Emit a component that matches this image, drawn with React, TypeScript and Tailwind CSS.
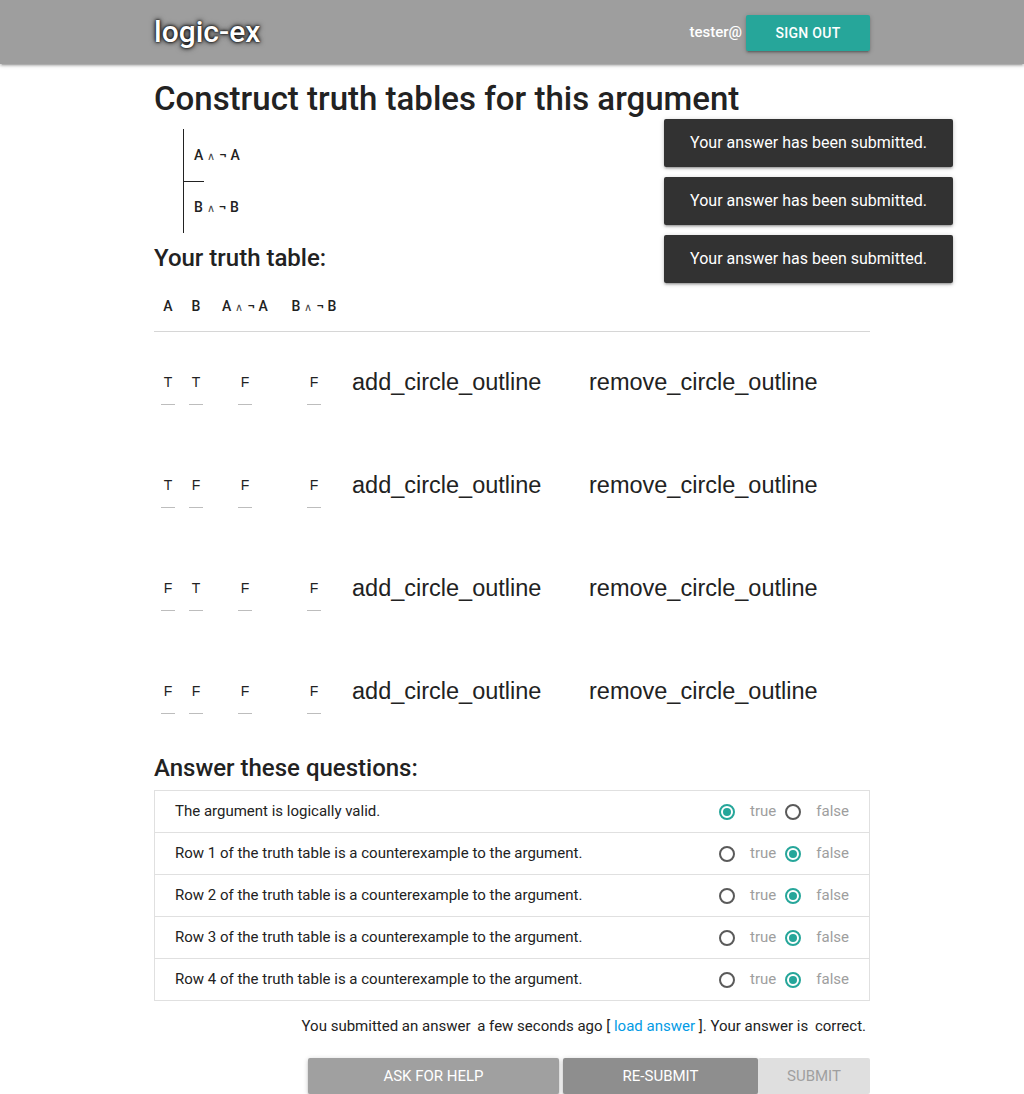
import React from "react";

const rows = [
  ["T", "T", "F", "F"],
  ["T", "F", "F", "F"],
  ["F", "T", "F", "F"],
  ["F", "F", "F", "F"],
];

const questions: [string, boolean][] = [
  ["The argument is logically valid.", true],
  ["Row 1 of the truth table is a counterexample to the argument.", false],
  ["Row 2 of the truth table is a counterexample to the argument.", false],
  ["Row 3 of the truth table is a counterexample to the argument.", false],
  ["Row 4 of the truth table is a counterexample to the argument.", false],
];

function Radio({ checked }: { checked: boolean }) {
  return checked ? (
    <span className="flex h-[16px] w-[16px] shrink-0 items-center justify-center rounded-full border-2 border-[#26a69a]">
      <span className="h-[8px] w-[8px] rounded-full bg-[#26a69a]" />
    </span>
  ) : (
    <span className="h-[16px] w-[16px] shrink-0 rounded-full border-2 border-[#5a5a5a]" />
  );
}

function Formula({ v }: { v: string }) {
  return (
    <span className="whitespace-nowrap">
      {v}
      <span className="mx-[4px] text-[11px] font-normal text-[#444]">∧</span>¬ {v}
    </span>
  );
}

function Cell({ v }: { v: string }) {
  return (
    <div className="flex flex-col items-center">
      <span
        className="h-[20px] text-[14px] leading-[20px] text-[#222]"
        style={{ fontFamily: '"Liberation Sans", Arial, sans-serif' }}
      >
        {v}
      </span>
      <span className="mt-[12px] h-px w-[14px] bg-[#bdbdbd]" />
    </div>
  );
}

const shadow =
  "shadow-[0_2px_2px_0_rgba(0,0,0,0.14),0_3px_1px_-2px_rgba(0,0,0,0.12),0_1px_5px_0_rgba(0,0,0,0.2)]";

export default function App() {
  const colW = ["w-[28px]", "w-[28px]", "w-[70px]", "w-[68px]"];
  return (
    <div
      className="relative min-h-[1094px] bg-white text-[#222]"
      style={{ fontFamily: 'Roboto, "Noto Sans", sans-serif' }}
    >
      <header className="h-16 bg-[#9e9e9e] shadow-[0_2px_2px_0_rgba(0,0,0,0.14),0_3px_1px_-2px_rgba(0,0,0,0.12),0_1px_5px_0_rgba(0,0,0,0.2)]">
        <div className="mx-auto flex h-16 w-[716px] items-center">
          <span
            className="text-[30px] font-medium leading-[64px] text-white"
            style={{ textShadow: "0 0 2px #000, 0 0 4px #000, 0 0 6px rgba(0,0,0,0.5)" }}
          >
            logic-ex
          </span>
          <div className="ml-auto flex items-center">
            <span className="text-[15px] font-medium text-white">tester@</span>
            <button
              className={`ml-[4px] mt-[2px] h-[36px] w-[124px] rounded-[2px] bg-[#26a69a] text-[14px] font-medium uppercase tracking-[0.3px] text-white ${shadow}`}
            >
              Sign out
            </button>
          </div>
        </div>
      </header>

      <main className="mx-auto w-[716px]">
        <h1 className="mt-[15px] h-[40px] whitespace-nowrap text-[33px] font-medium leading-[40px] text-[#222]">
          Construct truth tables for this argument
        </h1>

        <div className="ml-[29px] mt-[10px] w-[120px] border-l border-[#222]">
          <div className="flex h-[52px] items-center pl-[10px] text-[14px] font-medium">
            <Formula v="A" />
          </div>
          <div className="h-px w-[20px] bg-[#222]" />
          <div className="flex h-[51px] items-center pl-[10px] text-[14px] font-medium">
            <Formula v="B" />
          </div>
        </div>

        <h2 className="mt-[10px] h-[30px] text-[24px] font-medium leading-[30px]">Your truth table:</h2>

        <div className="mt-[21px] flex h-[24px] items-center text-[14px] font-medium">
          <div className={`${colW[0]} text-center`}>A</div>
          <div className={`${colW[1]} text-center`}>B</div>
          <div className={`${colW[2]} text-center`}>
            <Formula v="A" />
          </div>
          <div className={`${colW[3]} text-center`}>
            <Formula v="B" />
          </div>
        </div>
        <div className="mt-[13px] h-px bg-[#d6d6d6]" />

        {rows.map((r, ri) => (
          <div key={ri} className="flex h-[103px] items-start pt-[40px]">
            {r.map((v, i) => (
              <div key={i} className={`${colW[i]} flex justify-center`}>
                <Cell v={v} />
              </div>
            ))}
            <span
              className="ml-[4px] w-[237px] text-[23.5px] leading-[20px] text-[#222]"
              style={{ fontFamily: '"Liberation Sans", Arial, sans-serif' }}
            >
              add_circle_outline
            </span>
            <span
              className="text-[23.5px] leading-[20px] text-[#222]"
              style={{ fontFamily: '"Liberation Sans", Arial, sans-serif' }}
            >
              remove_circle_outline
            </span>
          </div>
        ))}

        <h2 className="mt-[9px] h-[30px] text-[24px] font-medium leading-[30px]">Answer these questions:</h2>

        <div className="mt-[7px] border border-b-0 border-[#e0e0e0]">
          {questions.map(([q, val], i) => (
            <div
              key={i}
              className="flex h-[42px] items-center border-b border-[#e0e0e0] pl-[20px] pr-[20px] text-[15px]"
            >
              <span className="text-[#222]">{q}</span>
              <div className="ml-auto flex items-center text-[15px] text-[#9e9e9e]">
                <Radio checked={val} />
                <span className="ml-[15px]">true</span>
                <span className="ml-[9px] flex">
                  <Radio checked={!val} />
                </span>
                <span className="ml-[15px]">false</span>
              </div>
            </div>
          ))}
        </div>

        <div className="mt-[15px] h-[20px] pr-[4px] text-right text-[15px] leading-[20px] text-[#222]">
          You submitted an answer <span className="ml-[3px]">a few seconds ago</span> [{" "}
          <span className="text-[#039be5]">load answer</span> ]. Your answer is{" "}
          <span className="ml-[3px]">correct.</span>
        </div>

        <div className="mt-[22px] flex justify-end">
          <button
            className={`h-[36px] w-[251px] rounded-[2px] bg-[#a0a0a0] text-[15px] uppercase text-white ${shadow}`}
          >
            Ask for help
          </button>
          <button
            className={`ml-[4px] h-[36px] w-[195px] rounded-[2px] bg-[#8e8e8e] text-[15px] uppercase text-white ${shadow}`}
          >
            Re-submit
          </button>
          <button className="h-[36px] w-[112px] rounded-[2px] bg-[#dfdfdf] text-[15px] uppercase text-[#9f9f9f]">
            Submit
          </button>
        </div>
      </main>

      <div className="absolute left-[664px] top-[119px] flex w-[289px] flex-col gap-[10px]">
        {[0, 1, 2].map((i) => (
          <div
            key={i}
            className={`flex h-[48px] items-center justify-center rounded-[2px] bg-[#323232] text-[16px] text-white ${shadow}`}
          >
            Your answer has been submitted.
          </div>
        ))}
      </div>
    </div>
  );
}
